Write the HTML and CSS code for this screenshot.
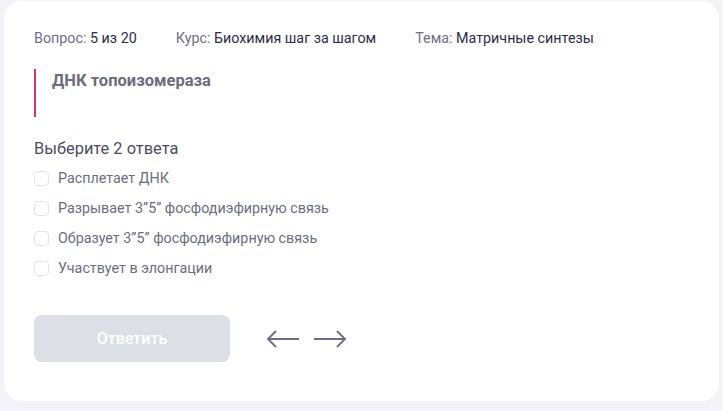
FILE: index.html
```html
<!DOCTYPE html>
<html lang="ru">
<head>
<meta charset="utf-8">
<link rel="stylesheet" href="styles.css">
</head>
<body>
<div class="card">
  <div class="meta">
    <span class="meta-item"><span class="label">Вопрос:</span> <span class="value">5 из 20</span></span>
    <span class="meta-item"><span class="label">Курс:</span> <span class="value">Биохимия шаг за шагом</span></span>
    <span class="meta-item"><span class="label">Тема:</span> <span class="value">Матричные синтезы</span></span>
  </div>
  <div class="question">
    <div class="title">ДНК топоизомераза</div>
  </div>
  <div class="prompt">Выберите 2 ответа</div>
  <ul class="options">
    <li class="option"><span class="box"></span>Расплетает ДНК</li>
    <li class="option"><span class="box"></span>Разрывает 3”5” фосфодиэфирную связь</li>
    <li class="option"><span class="box"></span>Образует 3”5” фосфодиэфирную связь</li>
    <li class="option"><span class="box"></span>Участвует в элонгации</li>
  </ul>
  <div class="actions">
    <button class="submit">Ответить</button>
    <div class="nav">
      <svg class="arrow" width="34" height="20" viewBox="0 0 34 20"><path d="M33 10H2M10 2L2 10L10 18" fill="none" stroke="#6b6d85" stroke-width="1.8"/></svg>
      <svg class="arrow" width="34" height="20" viewBox="0 0 34 20"><path d="M1 10H32M24 2L32 10L24 18" fill="none" stroke="#6b6d85" stroke-width="1.8"/></svg>
    </div>
  </div>
</div>
</body>
</html>
```
FILE: styles.css
```css
html, body {
  margin: 0;
  padding: 0;
}
body {
  background: #f4f3fa;
  font-family: Roboto, "Liberation Sans", sans-serif;
  width: 723px;
  height: 411px;
  overflow: hidden;
}
.card {
  margin: 1px 4px 0 4px;
  height: 400px;
  box-sizing: border-box;
  background: #ffffff;
  border-radius: 18px;
  padding: 27px 30px 39px 30px;
}
.meta {
  display: flex;
  gap: 39px;
  font-size: 14.3px;
  line-height: 20px;
}
.label {
  color: #6e7083;
}
.value {
  color: #2b2e4a;
}
.question {
  margin-top: 21px;
  height: 48px;
  border-left: 2px solid #e0325f;
  padding-left: 16px;
  box-sizing: border-box;
  padding-top: 2px;
}
.title {
  font-size: 16.5px;
  font-weight: 700;
  line-height: 20px;
  color: #6b6d7d;
}
.prompt {
  margin-top: 22px;
  font-size: 16.4px;
  line-height: 20px;
  color: #4b4e60;
}
.options {
  list-style: none;
  margin: 9px 0 0 0;
  padding: 0;
  display: flex;
  flex-direction: column;
  gap: 10px;
}
.option {
  display: flex;
  align-items: center;
  font-size: 14.3px;
  line-height: 20px;
  color: #6b6e80;
}
.box {
  width: 15px;
  height: 15px;
  box-sizing: border-box;
  border: 1px solid #e3e5ea;
  border-radius: 4px;
  margin-right: 9px;
}
.actions {
  margin-top: 37px;
  display: flex;
  align-items: center;
}
.submit {
  width: 196px;
  height: 47px;
  border: none;
  border-radius: 8px;
  background: #dce0e6;
  color: #ffffff;
  font-family: Roboto, "Liberation Sans", sans-serif;
  font-size: 16px;
  font-weight: 500;
}
.nav {
  margin-left: 36px;
  display: flex;
  gap: 13px;
  align-items: center;
}
.arrow {
  display: block;
}
```
